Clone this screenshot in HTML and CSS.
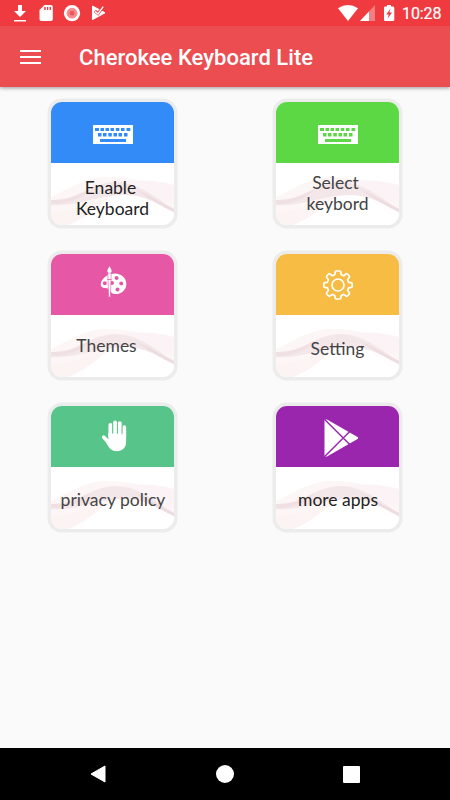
FILE: index.html
```html
<!DOCTYPE html>
<html lang="en">
<head>
<meta charset="utf-8">
<title>Cherokee Keyboard Lite</title>
<link rel="stylesheet" href="styles.css">
</head>
<body>
<svg class="defs" aria-hidden="true">
  <symbol id="wave" viewBox="0 0 123 62">
    <path d="M0 34C16 27 32 15 54 14C83 14 106 22 123 27V50C106 40 90 30 70 31C48 35 30 52 17 62H8Q0 61 0 54Z" fill="#fdf6f6"/>
    <path d="M0 49C28 48 42 37 58 35C45 45 32 57 17 62H8Q0 61 0 54Z" fill="#fcf3f3"/>
    <path d="M64 21C84 15 108 18 123 22V40C105 38 84 25 64 21Z" fill="#fbf3f5"/>
    <path d="M0 37C26 38 38 20 64 19C88 19 106 36 123 46V49C107 41 93 32 74 32C48 32 24 44 0 42Z" fill="#f4e7ea"/>
    <path d="M0 37C18 38 27 32 39 26C31 36 16 41 0 41Z" fill="#f0dfe3"/>
    <path d="M84 26C98 32 110 40 123 46V49C110 43 97 35 84 26Z" fill="#ecdce0"/>
  </symbol>
  <symbol id="keyboard" viewBox="0 0 40 19">
    <path fill="#fff" fill-rule="evenodd" d="M0 0H40V19H0ZM2 3V6H6V3ZM7.5 3V6H11V3ZM12.5 3V6H16V3ZM17.5 3V6H21V3ZM22.8 3V6H26.3V3ZM28 3V6H31.5V3ZM33.5 3V6H37.3V3ZM5 8V11.5H8.5V8ZM10 8V11.5H13.5V8ZM15.3 8V11.5H18.8V8ZM20.5 8V11.5H24V8ZM25.5 8V11.5H29V8ZM31 8V11.5H34.5V8ZM7 14V17H33V14Z"/>
  </symbol>
</svg>
<header class="status">
  <svg width="112" height="26" viewBox="0 0 112 26" fill="#fff">
    <path d="M18 5h4v6h4l-6 6-6-6h4zM14 20h12v1.5H14z"/>
    <path fill-rule="evenodd" d="M44.5 5H51q1.8 0 1.8 1.8V19.2Q52.8 21 51 21H41.2Q39.5 21 39.5 19.2V10ZM44.2 7V10H45.7V7ZM47 7V10H48.3V7ZM49.6 7V10H51V7Z"/>
    <circle cx="72" cy="13.2" r="8.1"/><circle cx="72" cy="13.2" r="5.4" fill="#f68b8e"/><circle cx="72" cy="13.2" r="2.4" fill="#ef5559"/>
    <path d="M92.5 6L105 12.8 92.5 19.6Z" stroke="#fff" stroke-linejoin="round"/>
    <path d="M94.8 10.8L98 13.6 104.5 5.2" fill="none" stroke="#ef3b40" stroke-width="3"/><path d="M95 11.4L98 14 103.2 6.6" fill="none" stroke="#fff" stroke-width="1.4"/>
    <path d="M92 6V20L96 17.8V16L93.8 12V7.2Z"/>
  </svg>
  <div class="status-right">
    <svg width="60" height="26" viewBox="338 0 60 26" fill="#fff">
      <path d="M338 8.3Q348 1.5 358 8.3L348 21Z"/>
      <path d="M375 5V21H360Z" opacity=".35"/><path d="M369 11.4V21H360Z"/>
      <path fill-rule="evenodd" d="M387 5H391V6.5H393Q394.3 6.5 394.3 8V19.8Q394.3 21 393 21H385Q384 21 384 19.8V8Q384 6.5 385 6.5H387ZM390.5 8.5L386.3 14.6H388.8L387.6 18.7L392 12.6H389.4Z"/>
    </svg>
    <span class="clock">10:28</span>
  </div>
</header>
<div class="appbar">
  <div class="menu"><i></i><i></i><i></i></div>
  <h1>Cherokee Keyboard Lite</h1>
</div>
<main class="grid">
  <div class="card">
    <div class="top blue"><svg class="kb"><use href="#keyboard"/></svg></div>
    <div class="body dark enable"><svg class="wave"><use href="#wave"/></svg><span class="label"><span class="first">Enable</span><br>Keyboard</span></div>
  </div>
  <div class="card">
    <div class="top green"><svg class="kb"><use href="#keyboard"/></svg></div>
    <div class="body select"><svg class="wave"><use href="#wave"/></svg><span class="label"><span class="first">Select</span><br>keybord</span></div>
  </div>
  <div class="card">
    <div class="top pink">
      <svg width="30" height="34" viewBox="0 0 30 34">
        <path fill="#fff" fill-rule="evenodd" d="M1.8 17.5C3 11.5 9.5 7.5 16.5 7.5C23.5 8 27.8 13 27.3 19C26.8 25 21 28.5 15.5 28C11 27.5 12 23 9 22.4C5.5 22.2 1 22 1.8 17.5ZM17.6 10A2 2 0 1 0 17.6 14A2 2 0 1 0 17.6 10ZM22.2 15.5A2 2 0 1 0 22.2 19.5A2 2 0 1 0 22.2 15.5ZM18.5 21.5A2 2 0 1 0 18.5 25.5A2 2 0 1 0 18.5 21.5ZM5.8 15.3A2 2 0 1 0 5.8 19.3A2 2 0 1 0 5.8 15.3ZM13 15A2 2 0 1 0 13 19A2 2 0 1 0 13 15Z"/>
        <path d="M8.8 7H12.2L11.4 31H9.6Z" fill="#fff" stroke="#e658a5" stroke-width=".6"/>
        <path fill="#fff" d="M10.5 .3C9.9 2 8 3.2 8.4 5.5Q9 7 10.5 7T12.6 5.5C13 3.2 11.1 2 10.5 .3Z"/>
        <path d="M8.3 13.5H12.6" stroke="#e658a5" stroke-width=".8"/>
      </svg>
    </div>
    <div class="body themes"><svg class="wave"><use href="#wave"/></svg><span class="label">Themes</span></div>
  </div>
  <div class="card">
    <div class="top yellow">
      <svg width="32" height="32" viewBox="0 0 32 32" fill="none" stroke="#fff" stroke-width="1.7" stroke-linejoin="round">
        <circle cx="16" cy="16" r="6"/>
        <path d="M14 2H18Q18.7 2 18.8 3L19.2 5.6L21.7 6.7L24 5Q24.8 4.4 25.4 5L27.3 7Q27.8 7.6 27.3 8.3L25.6 10.8L26.6 13.3L29.2 13.6Q30.2 13.8 30.2 14.6V17.4Q30.2 18.3 29.4 18.4L26.6 18.8L25.6 21.3L27.3 23.7Q27.8 24.4 27.3 25L25.4 27Q24.8 27.6 24 27L21.7 25.4L19.2 26.5L18.8 29Q18.7 30 18 30H14Q13.3 30 13.2 29L12.8 26.5L10.3 25.4L8 27Q7.2 27.6 6.6 27L4.7 25Q4.2 24.4 4.7 23.7L6.4 21.3L5.4 18.8L2.8 18.4Q1.8 18.3 1.8 17.4V14.6Q1.8 13.8 2.8 13.6L5.4 13.3L6.4 10.8L4.7 8.3Q4.2 7.6 4.7 7L6.6 5Q7.2 4.4 8 5L10.3 6.7L12.8 5.6L13.2 3Q13.3 2 14 2Z"/>
      </svg>
    </div>
    <div class="body setting"><svg class="wave"><use href="#wave"/></svg><span class="label">Setting</span></div>
  </div>
  <div class="card">
    <div class="top mint">
      <svg width="26" height="32" viewBox="0 0 26 32" fill="none" stroke="#fff" stroke-linecap="round">
        <path stroke-width="3.9" d="M9.4 17V5M14.1 16V2.4M18.8 16V3.3M23.2 18V7.3"/>
        <path stroke-width="3.6" d="M2.8 17.2L8.5 23.5"/>
        <path fill="#fff" stroke="none" d="M7.4 13H25.1V22C25.1 28 21 31.2 16 31.2C10.5 31.2 8.5 28.5 5.5 23.5L4.5 17L7.4 19.5Z"/>
        <path stroke="#57c58a" stroke-width=".8" d="M11.7 4V13.5M16.4 4V13.5M21.1 6V14"/>
      </svg>
    </div>
    <div class="body privacy"><svg class="wave"><use href="#wave"/></svg><span class="label">privacy policy</span></div>
  </div>
  <div class="card">
    <div class="top purple">
      <svg class="play" width="36" height="38" viewBox="0 0 36 38" fill="#fff">
        <path d="M1.5 .5H4L35 18.3V19.7L4 37.5H1.5Z"/>
        <path d="M1.4 .2L27 25.8M1.4 37.8L27 12.2" stroke="#9b26ae" stroke-width="1.4"/>
      </svg>
    </div>
    <div class="body dark apps"><svg class="wave"><use href="#wave"/></svg><span class="label">more apps</span></div>
  </div>
</main>
<nav class="navbar">
  <svg width="18" height="20" viewBox="0 0 18 20"><path d="M1 10L15 2V18Z" fill="#fff" stroke="#fff" stroke-linejoin="round"/></svg>
  <span class="home"></span>
  <span class="recent"></span>
</nav>
</body>
</html>
```
FILE: styles.css
```css
* { box-sizing: border-box; }
body {
  margin: 0;
  width: 450px;
  height: 800px;
  display: flex;
  flex-direction: column;
  background: #fafafa;
  font-family: Roboto, sans-serif;
  overflow: hidden;
}
svg { display: block; flex: none; }
.defs { position: absolute; width: 0; height: 0; }
.status {
  height: 26px;
  flex: none;
  display: flex;
  justify-content: space-between;
  background: #ef3b40;
  color: #fff;
}
.status-right { display: flex; padding-right: 9px; gap: 4px; }
.clock { font-size: 16px; line-height: 28px; width: 39px; white-space: nowrap; letter-spacing: -0.1px; -webkit-text-stroke: 0.2px #fff; }
.appbar {
  height: 61px;
  flex: none;
  display: flex;
  align-items: center;
  padding: 2px 0 0 20px;
  background: #eb4d50;
  box-shadow: 0 1px 4px rgba(0, 0, 0, .4);
  clip-path: inset(0 0 -8px 0);
}
.menu { width: 21px; height: 15px; display: flex; flex-direction: column; justify-content: space-between; margin: -1px 38px 0 0; }
.menu i { height: 2.4px; background: #fff; }
h1 { margin: 0; font-size: 22px; line-height: 28px; font-weight: 500; color: #fff; white-space: nowrap; letter-spacing: 0.03px; }
.grid {
  flex: 1;
  display: grid;
  grid-template-columns: 129px 129px;
  grid-auto-rows: 129px;
  gap: 23px 96px;
  align-content: start;
  padding: 12px 0 0 48px;
}
.card { border: 3px solid #ececec; border-radius: 14px; overflow: hidden; background: #fff; box-shadow: 0 0 0 .5px #ececec; }
.top { height: 61px; display: flex; align-items: center; justify-content: center; }
.kb { width: 40px; height: 19px; margin-top: 4px; }
.play { margin-left: 6px; margin-top: 3px; }
.pink svg { margin-top: -4px; margin-left: 2px; }
.mint svg { margin-left: 2px; margin-top: -1px; }
.blue { background: #338bf8; }
.green { background: #5bd843; }
.pink { background: #e658a5; }
.yellow { background: #f6bc43; }
.mint { background: #57c58a; }
.purple { background: #9b26ae; }
.body {
  height: 62px;
  display: grid;
  place-items: center;
  color: #444;
  font: 17.5px/21px Lato, sans-serif;
  text-align: center;
  white-space: nowrap;
}
.body > * { grid-area: 1 / 1; }
.wave { width: 123px; height: 62px; }
.label { z-index: 1; }
.dark { color: #222; }
.enable .label { padding-top: 7px; }
.first { margin-right: 4px; }
.select .label { margin-top: -2px; }
.themes .label { padding-right: 12px; margin-top: -2px; }
.setting .label { padding-top: 4px; }
.privacy .label, .apps .label { padding-top: 3px; }
.privacy .label { padding-left: 1px; }
.apps .label { padding-left: 1px; }
.navbar {
  height: 52px;
  flex: none;
  display: flex;
  align-items: center;
  justify-content: space-between;
  padding: 0 90px;
  background: #000;
}
.home { width: 18px; height: 18px; margin-right: 1px; border-radius: 50%; background: #fff; }
.recent { width: 17px; height: 17px; border-radius: 1px; background: #fff; }
```
